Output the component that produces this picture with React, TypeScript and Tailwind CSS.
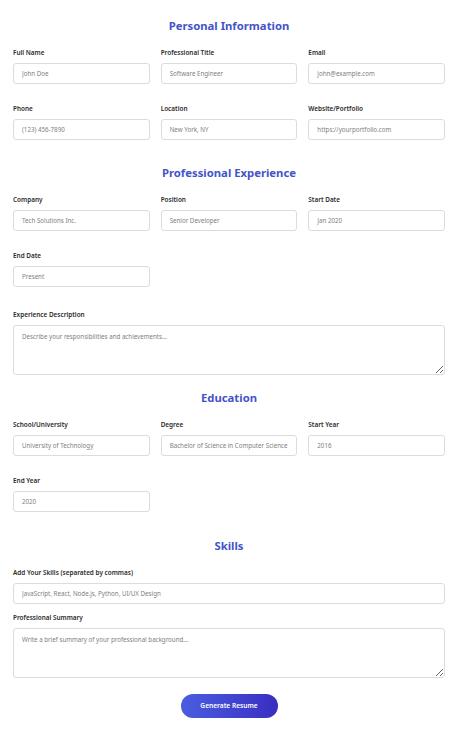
import React from "react";

const font = { fontFamily: '"Noto Sans", "Open Sans", Arial, sans-serif' };

function Field({ label, placeholder }: { label: string; placeholder: string }) {
  return (
    <div className="flex flex-col">
      <label className="h-[10px] text-[6.4px] leading-[10px] font-semibold text-[#2b2b2b] mb-[5px] whitespace-nowrap">
        {label}
      </label>
      <input
        placeholder={placeholder}
        className="h-[21px] w-full border border-[#dcdcdc] rounded-[3px] px-[8px] text-[6.2px] bg-white outline-none placeholder:text-[#808080]"
      />
    </div>
  );
}

function Area({ label, placeholder }: { label: string; placeholder: string }) {
  return (
    <div className="flex flex-col">
      <label className="h-[10px] text-[6.4px] leading-[10px] font-semibold text-[#2b2b2b] mb-[5px]">{label}</label>
      <textarea
        placeholder={placeholder}
        className="h-[50px] w-full border border-[#dcdcdc] rounded-[3px] px-[8px] py-[6px] text-[6.2px] leading-[10px] bg-white outline-none placeholder:text-[#808080]"
      />
    </div>
  );
}

function Title({ children }: { children: React.ReactNode }) {
  return (
    <h2 className="text-center text-[11.3px] leading-[16px] font-bold text-[#4354c8] mb-[14px]">{children}</h2>
  );
}

export default function App() {
  return (
    <div className="min-h-screen bg-white" style={font}>
      <div className="w-[432px] ml-[13px] pt-[18px] pb-[13px]">
        <Title>Personal Information</Title>
        <div className="grid grid-cols-3 gap-x-[11px] gap-y-[20px]">
          <Field label="Full Name" placeholder="John Doe" />
          <Field label="Professional Title" placeholder="Software Engineer" />
          <Field label="Email" placeholder="john@example.com" />
          <Field label="Phone" placeholder="(123) 456-7890" />
          <Field label="Location" placeholder="New York, NY" />
          <Field label="Website/Portfolio" placeholder="https://yourportfolio.com" />
        </div>

        <div className="mt-[25px]">
          <Title>Professional Experience</Title>
        </div>
        <div className="grid grid-cols-3 gap-x-[11px] gap-y-[20px]">
          <Field label="Company" placeholder="Tech Solutions Inc." />
          <Field label="Position" placeholder="Senior Developer" />
          <Field label="Start Date" placeholder="Jan 2020" />
          <Field label="End Date" placeholder="Present" />
        </div>
        <div className="mt-[23px]">
          <Area label="Experience Description" placeholder="Describe your responsibilities and achievements..." />
        </div>

        <div className="mt-[15px]">
          <Title>Education</Title>
        </div>
        <div className="grid grid-cols-3 gap-x-[11px] gap-y-[20px]">
          <Field label="School/University" placeholder="University of Technology" />
          <Field label="Degree" placeholder="Bachelor of Science in Computer Science" />
          <Field label="Start Year" placeholder="2016" />
          <Field label="End Year" placeholder="2020" />
        </div>

        <div className="mt-[26px]">
          <Title>Skills</Title>
        </div>
        <Field label="Add Your Skills (separated by commas)" placeholder="JavaScript, React, Node.js, Python, UI/UX Design" />
        <div className="mt-[9px]">
          <Area label="Professional Summary" placeholder="Write a brief summary of your professional background..." />
        </div>

        <div className="flex justify-center mt-[16px]">
          <button className="h-[24px] w-[97px] rounded-full bg-gradient-to-r from-[#4a5de0] to-[#3a2cc2] text-white text-[6.6px] font-semibold">
            Generate Resume
          </button>
        </div>
      </div>
    </div>
  );
}
